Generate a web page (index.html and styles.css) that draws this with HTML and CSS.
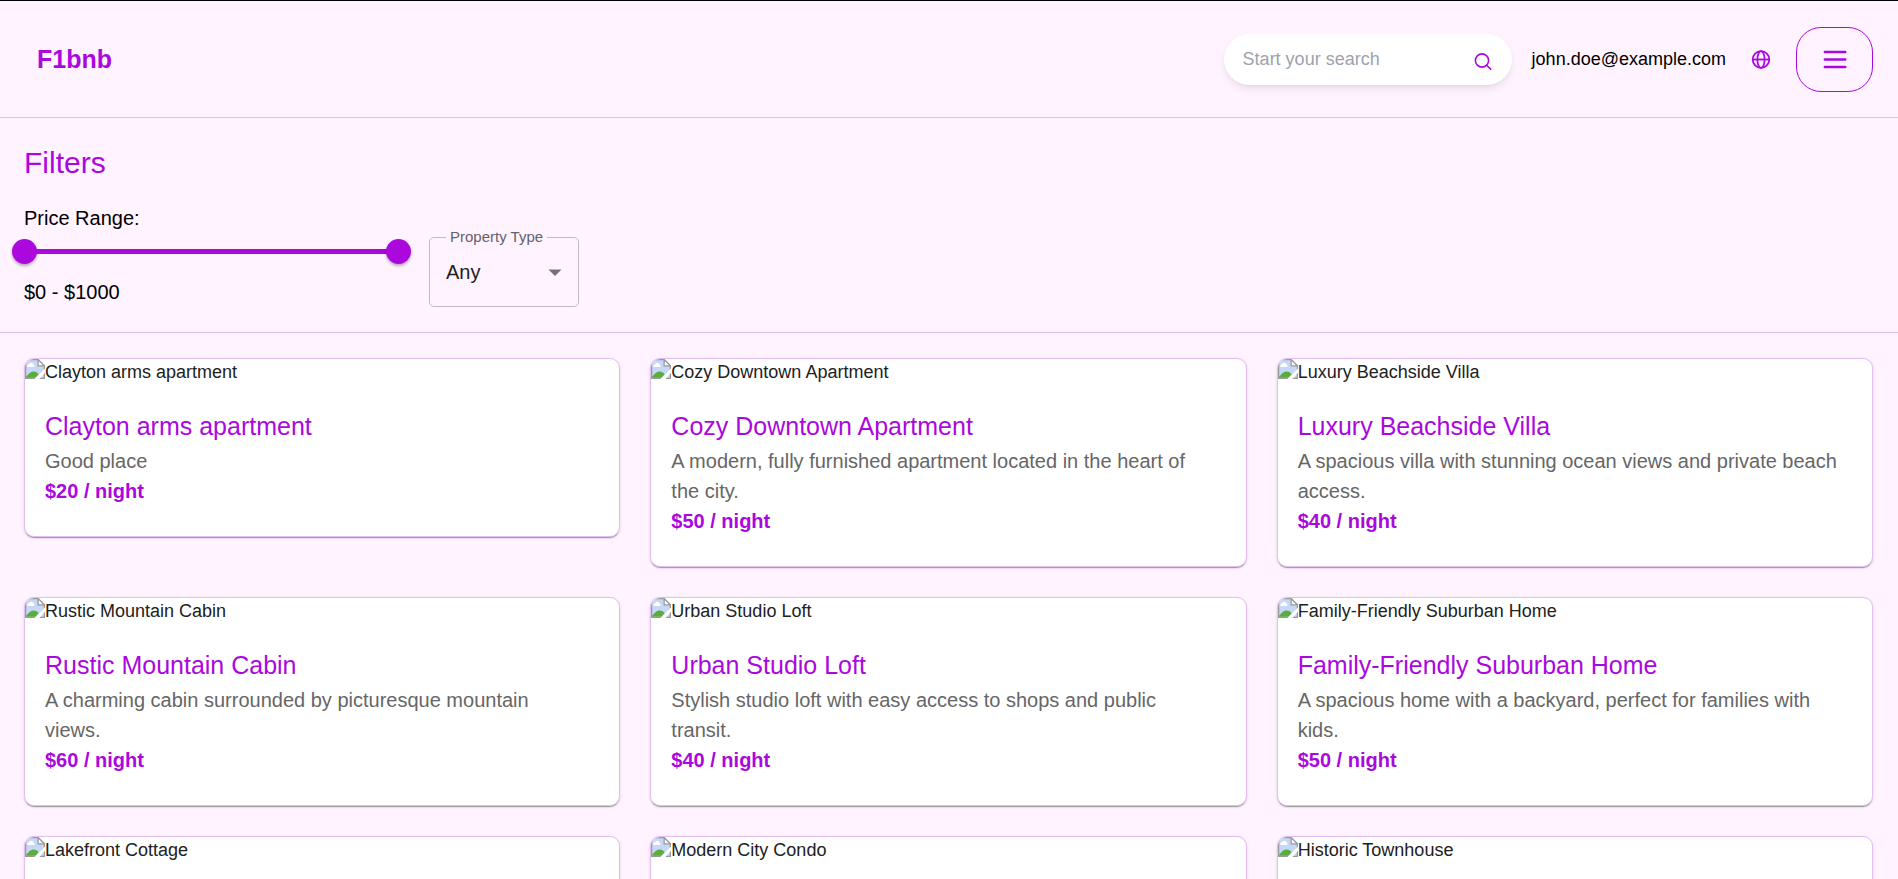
FILE: index.html
```html
<!DOCTYPE html>
<html lang="en">
<head>
<meta charset="utf-8">
<title>F1bnb</title>
<link rel="stylesheet" href="styles.css">
</head>
<body>
<svg class="defs" aria-hidden="true">
  <symbol id="broken" viewBox="0 0 16 16">
    <path d="M0.500 0.500H10.500L15.500 5.500V15.500H0.500z" fill="#c6d7f7" stroke="#9a9a9a"/>
    <path d="M2 6.300a1.500 1.500 0 0 1 1.300-2.200a1.900 1.900 0 0 1 3.500 0.300a1.100 1.100 0 0 1 0.400 1.900z" fill="#fff"/>
    <path d="M1 15V14C3 11.500 5 10 7 10C8.700 10 10 11 11 12.200L8.500 15z" fill="#5aad3a"/>
    <path d="M10.500 0.500V5.500H15.500z" fill="#fff" stroke="#9a9a9a"/>
    <path d="M7.500 16L16 7.500V11L11.500 16z" fill="#fff"/>
  </symbol>
</svg>
<header class="topbar">
  <a class="logo" href="#">F1bnb</a>
  <div class="actions">
    <form class="search">
      <input class="search-input" type="text" placeholder="Start your search" aria-label="Search">
      <button class="icon-button" type="button" aria-label="Search">
        <svg width="20" height="20" viewBox="0 0 20 20" fill="none" stroke="currentColor" stroke-width="1.600" stroke-linecap="round"><circle cx="9" cy="10.500" r="6.600"/><path d="M13.700 15.200L17.600 19.100"/></svg>
      </button>
    </form>
    <div class="account">
      <span class="email">john.doe@example.com</span>
      <button class="icon-button" type="button" aria-label="Language">
        <svg width="20" height="20" viewBox="0 0 20 20" fill="none" stroke="currentColor" stroke-width="1.800"><circle cx="10" cy="9.500" r="8.300"/><ellipse cx="10" cy="9.500" rx="3.600" ry="8.300"/><path d="M1.700 9.500H18.300"/></svg>
      </button>
      <button class="menu-button" type="button" aria-label="Menu">
        <svg width="30" height="30" viewBox="0 0 30 30" fill="none" stroke="currentColor" stroke-width="2.600" stroke-linecap="round"><path d="M4.900 7H25.200M4.900 14.500H25.200M4.900 22H25.200"/></svg>
      </button>
    </div>
  </div>
</header>
<section class="filters">
  <h2 class="filters-title">Filters</h2>
  <div class="filters-row">
    <div class="price" role="group" aria-labelledby="price-label">
      <p class="price-text" id="price-label">Price Range:</p>
      <div class="slider">
        <input class="range" type="range" min="0" max="1000" value="0" aria-label="Minimum price">
        <input class="range" type="range" min="0" max="1000" value="1000" aria-label="Maximum price">
      </div>
      <p class="price-text">$0 - $1000</p>
    </div>
    <div class="field">
      <label class="field-label" for="type">Property Type</label>
      <select class="field-select" id="type"><option>Any</option><option>Apartment</option><option>House</option></select>
      <svg class="field-arrow" width="14" height="7" viewBox="0 0 14 7" aria-hidden="true"><path d="M0.500 0.500H13.500L7 7z" fill="#757078"/></svg>
    </div>
  </div>
</section>
<main class="listings">
  <article class="card">
    <div class="photo"><svg class="photo-icon"><use href="#broken"/></svg><span>Clayton arms apartment</span></div>
    <div class="card-body"><h3 class="card-title">Clayton arms apartment</h3><p class="card-text">Good place</p><p class="card-price">$20 / night</p></div>
  </article>
  <article class="card">
    <div class="photo"><svg class="photo-icon"><use href="#broken"/></svg><span>Cozy Downtown Apartment</span></div>
    <div class="card-body"><h3 class="card-title">Cozy Downtown Apartment</h3><p class="card-text">A modern, fully furnished apartment located in the heart of the city.</p><p class="card-price">$50 / night</p></div>
  </article>
  <article class="card">
    <div class="photo"><svg class="photo-icon"><use href="#broken"/></svg><span>Luxury Beachside Villa</span></div>
    <div class="card-body"><h3 class="card-title">Luxury Beachside Villa</h3><p class="card-text">A spacious villa with stunning ocean views and private beach access.</p><p class="card-price">$40 / night</p></div>
  </article>
  <article class="card">
    <div class="photo"><svg class="photo-icon"><use href="#broken"/></svg><span>Rustic Mountain Cabin</span></div>
    <div class="card-body"><h3 class="card-title">Rustic Mountain Cabin</h3><p class="card-text">A charming cabin surrounded by picturesque mountain views.</p><p class="card-price">$60 / night</p></div>
  </article>
  <article class="card">
    <div class="photo"><svg class="photo-icon"><use href="#broken"/></svg><span>Urban Studio Loft</span></div>
    <div class="card-body"><h3 class="card-title">Urban Studio Loft</h3><p class="card-text">Stylish studio loft with easy access to shops and public transit.</p><p class="card-price">$40 / night</p></div>
  </article>
  <article class="card">
    <div class="photo"><svg class="photo-icon"><use href="#broken"/></svg><span>Family-Friendly Suburban Home</span></div>
    <div class="card-body"><h3 class="card-title">Family-Friendly Suburban Home</h3><p class="card-text">A spacious home with a backyard, perfect for families with kids.</p><p class="card-price">$50 / night</p></div>
  </article>
  <article class="card">
    <div class="photo"><svg class="photo-icon"><use href="#broken"/></svg><span>Lakefront Cottage</span></div>
    <div class="card-body"></div>
  </article>
  <article class="card">
    <div class="photo"><svg class="photo-icon"><use href="#broken"/></svg><span>Modern City Condo</span></div>
    <div class="card-body"></div>
  </article>
  <article class="card">
    <div class="photo"><svg class="photo-icon"><use href="#broken"/></svg><span>Historic Townhouse</span></div>
    <div class="card-body"></div>
  </article>
</main>
</body>
</html>
```
FILE: styles.css
```css
:root {
  --accent: #ab08dd;
  --line: #e4bdf3;
  --page: #fef3ff;
}

* {
  box-sizing: border-box;
}

html {
  scrollbar-width: none;
}

body {
  margin: 0;
  border-top: 1px solid #000;
  background: var(--page);
  color: #000;
  font: 20px/30px "Liberation Sans", Arial, sans-serif;
}

h2,
h3,
p {
  margin: 0;
  font-weight: 400;
}

button,
input,
select {
  font: inherit;
}

.defs {
  display: none;
}

.topbar {
  display: flex;
  align-items: center;
  justify-content: space-between;
  padding: 26px 25px 25px 37px;
  border-bottom: 1px solid var(--line);
}

.logo {
  padding-bottom: 2px;
  color: var(--accent);
  font-size: 25px;
  font-weight: 700;
  text-decoration: none;
}

.actions {
  display: flex;
  align-items: center;
  gap: 20px;
}

.account {
  display: flex;
  align-items: center;
  gap: 25px;
}

.search {
  display: flex;
  align-items: center;
  width: 288px;
  height: 51px;
  padding: 0 19px;
  border-radius: 26px;
  background: #fff;
  box-shadow: 0 5px 8px -1px rgb(0 0 0 / 8%), 0 2px 4px -1px rgb(0 0 0 / 5%);
}

.search-input {
  flex: 1;
  min-width: 0;
  padding: 0 0 2px;
  border: 0;
  outline: 0;
  background: none;
  font-size: 18px;
}

.search-input::placeholder {
  color: #9ca3af;
}

.icon-button {
  display: flex;
  padding: 0;
  border: 0;
  background: none;
  color: var(--accent);
}

.email {
  padding-bottom: 2px;
  font-size: 18px;
}

.menu-button {
  display: flex;
  align-items: center;
  justify-content: center;
  width: 77px;
  height: 65px;
  padding: 0;
  border: 1px solid var(--accent);
  border-radius: 25px;
  background: none;
  color: var(--accent);
}

.filters {
  padding: 25px 24px;
  border-bottom: 1px solid var(--line);
}

.filters-title {
  margin-bottom: 20px;
  color: var(--accent);
  font-size: 30px;
  line-height: 40px;
}

.filters-row {
  display: flex;
  align-items: flex-end;
  gap: 30px;
}

.price {
  width: 375px;
}

.slider {
  display: grid;
  align-items: center;
  height: 44px;
  margin: 0 -12px;
  padding-bottom: 8px;
}

.range {
  grid-area: 1 / 1;
  width: 100%;
  height: 26px;
  margin: 0;
  appearance: none;
  background: linear-gradient(var(--accent), var(--accent)) center / calc(100% - 26px) 5px no-repeat;
  pointer-events: none;
}

.range::-webkit-slider-thumb {
  appearance: none;
  width: 25px;
  height: 25px;
  border-radius: 50%;
  background: var(--accent);
  box-shadow: 0 2px 3px rgb(0 0 0 / 30%);
  pointer-events: auto;
}

.field {
  position: relative;
  width: 150px;
}

.field-label {
  position: absolute;
  top: -10px;
  left: 17px;
  padding: 0 4px;
  background: var(--page);
  color: #666168;
  font-size: 15px;
  line-height: 20px;
}

.field-select {
  display: block;
  width: 100%;
  height: 70px;
  padding: 0 40px 0 16px;
  border: 1px solid #c3bac5;
  border-radius: 5px;
  appearance: none;
  background: none;
  color: #211f21;
}

.field-arrow {
  position: absolute;
  top: 32px;
  right: 17px;
  pointer-events: none;
}

.listings {
  display: grid;
  grid-template-columns: repeat(3, 1fr);
  align-items: start;
  gap: 30px;
  padding: 25px 25px 0 24px;
}

.card {
  overflow: hidden;
  border: 1px solid var(--line);
  border-radius: 10px;
  background: #fff;
  box-shadow: 0 2px 1px -1px rgb(0 0 0 / 32%), 0 1px 3px rgb(0 0 0 / 14%);
}

.photo {
  display: flex;
  align-items: flex-start;
  height: 27px;
  color: #212121;
  font-size: 18px;
  line-height: 27px;
}

.photo-icon {
  width: 20px;
  height: 20px;
}

.card-body {
  padding: 20px 20px 30px;
}

.card-title {
  color: var(--accent);
  font-size: 25px;
  line-height: 40px;
}

.card-text {
  padding-right: 12px;
  color: #666;
}

.card-price {
  color: var(--accent);
  font-weight: 700;
}
```
